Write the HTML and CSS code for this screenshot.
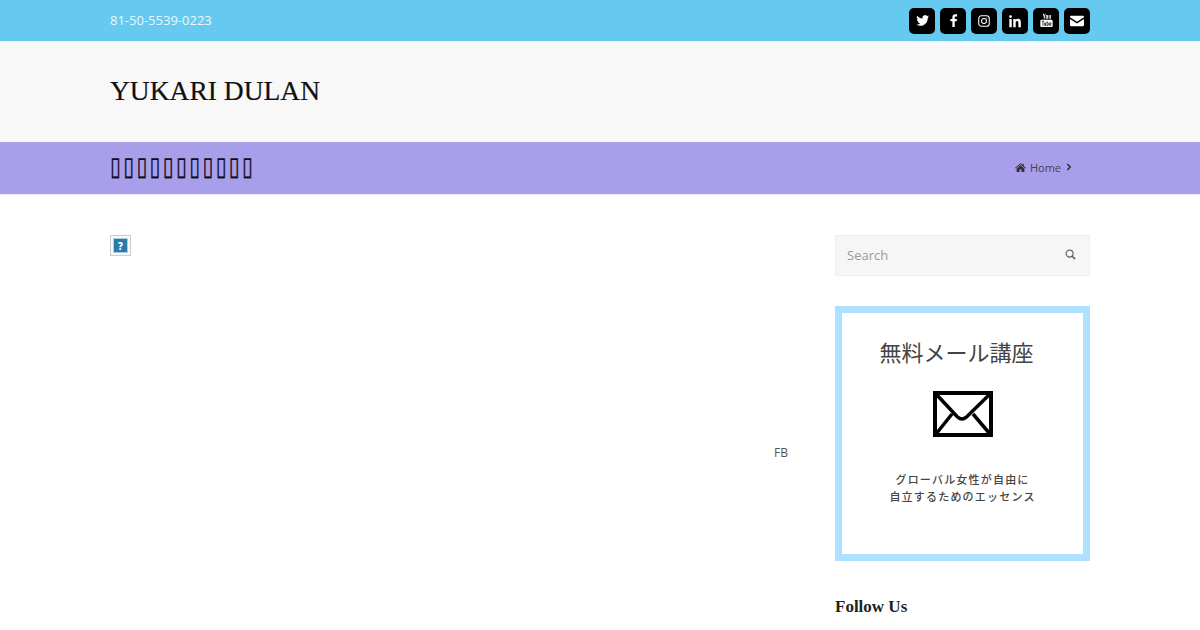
FILE: index.html
```html
<!DOCTYPE html>
<html lang="en">
<head>
<meta charset="utf-8">
<title>Yukari Dulan</title>
<link rel="stylesheet" href="styles.css">
</head>
<body>
<div class="topbar">
  <div class="wrap topbar-in">
    <span class="phone">81-50-5539-0223</span>
    <div class="social">
      <a class="soc"><svg viewBox="0 0 16 16" width="15" height="15"><path fill="#fff" d="M15 3.600c-.5.2-1 .4-1.600.4.600-.3 1-.9 1.200-1.500-.5.3-1.100.6-1.800.7a2.800 2.800 0 0 0-4.800 2.600C5.700 5.700 3.700 4.600 2.300 2.900c-.8 1.300-.4 2.900.9 3.800-.5 0-.9-.1-1.300-.4 0 1.400 1 2.600 2.300 2.800-.4.100-.8.100-1.300 0 .4 1.100 1.400 1.900 2.600 2-1.200 1-2.800 1.400-4.200 1.200 1.300.8 2.700 1.300 4.300 1.300 5.200 0 8.200-4.400 8-8.400.6-.4 1-.9 1.400-1.600z"/></svg></a>
      <a class="soc"><svg viewBox="0 0 16 16" width="15" height="15"><path fill="#fff" d="M9.300 15V8.700h2.100l.3-2.400H9.300V4.800c0-.7.200-1.200 1.200-1.200h1.300V1.400C11.500 1.400 10.800 1.300 10 1.300c-1.900 0-3.200 1.100-3.200 3.200v1.800H4.700v2.400h2.100V15z"/></svg></a>
      <a class="soc"><svg viewBox="0 0 16 16" width="14" height="14" fill="none" stroke="#fff" stroke-width="1.200"><rect x="2" y="2" width="12" height="12" rx="3"/><circle cx="8" cy="8" r="2.800"/><circle cx="11.400" cy="4.600" r=".6" fill="#fff" stroke="none"/></svg></a>
      <a class="soc"><svg viewBox="0 0 16 16" width="14" height="14"><path fill="#fff" d="M1.500 5.700h2.800V15H1.500zM2.900 1.300a1.600 1.600 0 1 1 0 3.200 1.600 1.600 0 0 1 0-3.200zM6 5.700h2.700v1.300c.5-.9 1.500-1.500 2.800-1.500 2.700 0 3.200 1.800 3.200 4.200V15h-2.800v-4.700c0-1.100-.1-2.400-1.500-2.400-1.500 0-1.600 1.100-1.600 2.300V15H6z"/></svg></a>
      <a class="soc"><svg viewBox="0 0 16 16" width="15" height="15"><path fill="#fff" d="M4 .8h.9l.7 2 .6-2h1L6.100 4v2.100h-1V4zM8.400 2c.8 0 1.200.5 1.200 1.100v1.900c0 .7-.5 1.100-1.200 1.100s-1.200-.4-1.200-1.100V3.100C7.200 2.500 7.700 2 8.400 2zm0 .8c-.2 0-.3.100-.3.300v2c0 .2.100.3.300.3s.3-.1.300-.3v-2c0-.2-.1-.3-.3-.3zM10.300 2.100h.9v3c0 .2.300.2.500-.1V2.100h.9v3.900h-.9v-.4c-.6.700-1.400.6-1.400-.2zM2.800 7.300h10.400c.8 0 1.400.6 1.400 1.400v4.900c0 .8-.6 1.400-1.400 1.400H2.800c-.8 0-1.400-.6-1.400-1.400V8.700c0-.8.600-1.400 1.400-1.400z"/><path stroke="#000" stroke-width=".7" fill="none" d="M3 8.800h2.400M4.200 8.800v5M6 10.200v2.900c0 .4.500.4 1-.1M7 10.200v3.500M8.500 8.700v5M8.500 10.600c.9-.6 1.400-.3 1.400.3v2c0 .7-.7.800-1.400.2M12.900 12.600c0 1.300-1.800 1.300-1.800 0v-1.500c0-1.200 1.800-1.200 1.800 0v.8h-1.800"/></svg></a>
      <a class="soc"><svg viewBox="0 0 16 16" width="16" height="16"><path fill="#fff" d="M1 3.900c0-.7.500-1.100 1.100-1.100h11.800c.6 0 1.100.4 1.100 1.100v.4L8 8.800 1 4.300zM1 5.900l7 4.500 7-4.500v6.200c0 .6-.5 1.100-1.100 1.100H2.100c-.6 0-1.100-.5-1.100-1.100z"/></svg></a>
    </div>
  </div>
</div>
<header class="masthead">
  <div class="wrap"><h1 class="logo">YUKARI DULAN</h1></div>
</header>
<div class="titlebar">
  <div class="wrap titlebar-in">
    <h2 class="page-title">▯▯▯▯▯▯▯▯▯▯▯</h2>
    <div class="crumbs">
      <svg class="home-ic" viewBox="0 0 12 10" width="11" height="9"><path fill="#333" d="M6 .3 0 5.300l.6.700L6 1.600 11.400 6l.6-.7L9.700 3.400V.8H8.300v1.400zM1.700 6v4h3.200V7.200h2.200V10h3.200V6L6 2.500z"/></svg>
      <span>Home</span>
      <svg class="chev" viewBox="0 0 6 8" width="6" height="8"><path fill="none" stroke="#222" stroke-width="1.300" d="M1.300 1l3 3-3 3"/></svg>
    </div>
  </div>
</div>
<div class="wrap content">
  <main class="main">
    <span class="broken"><svg viewBox="0 0 15 15" width="15" height="15"><rect x=".5" y=".5" width="14" height="14" fill="#2b78ad" stroke="#a9cfe6"/><text x="7.500" y="11.500" class="q">?</text></svg></span>
    <p class="fb">FB</p>
  </main>
  <aside class="side">
    <div class="search"><span>Search</span>
      <svg viewBox="0 0 12 12" width="11" height="11"><circle cx="5" cy="5" r="3.800" fill="none" stroke="#666" stroke-width="1.300"/><path d="M7.800 7.800 11 11" stroke="#666" stroke-width="1.700"/></svg>
    </div>
    <div class="banner">
      <div class="banner-title">無料メール講座</div>
      <svg class="env" viewBox="0 0 60 46" width="60" height="46"><rect x="2" y="2" width="56" height="42" fill="#fff" stroke="#000" stroke-width="4"/><path d="M3 3 24.500 26Q29 30 33.500 26L57 3M3 43 19 23M57 43 40 23" fill="none" stroke="#000" stroke-width="3.500"/></svg>
      <div class="banner-sub">グローバル女性が自由に<br>自立するためのエッセンス</div>
    </div>
    <h3 class="follow">Follow Us</h3>
  </aside>
</div>
</body>
</html>
```
FILE: styles.css
```css
* { box-sizing: border-box; }
html, body { margin: 0; padding: 0; }
body { height: 630px; overflow: hidden; background: #fff; font-family: "Open Sans", sans-serif; color: #555; }
.wrap { width: 980px; margin: 0 auto; }
.topbar { height: 41px; background: #65c9f0; }
.topbar-in { display: flex; justify-content: space-between; align-items: center; height: 41px; }
.phone { color: #e9f7fc; font-size: 13px; position: relative; top: -1px; }
.social { display: flex; gap: 5px; }
.soc { width: 26px; height: 26px; background: #000; border-radius: 5px; display: flex; align-items: center; justify-content: center; }
.masthead { height: 101px; background: #f8f8f8; border-top: 1px solid #eee; }
.logo { margin: 0; padding-top: 34px; font: 400 27.500px/30px "Liberation Serif", serif; color: #111; -webkit-text-stroke: .2px #111; }
.titlebar { height: 53px; background: #a99eea; border-bottom: 1px solid #ece9f8; }
.titlebar-in { display: flex; justify-content: space-between; align-items: center; height: 52px; }
.page-title { margin: 0 0 5px; font: 400 26px/30px "DejaVu Sans", sans-serif; color: #0c0c20; letter-spacing: 3.300px; transform: scaleX(.75); transform-origin: left center; -webkit-text-stroke: .3px #0c0c20; }
.crumbs { display: flex; align-items: center; gap: 4px; font-size: 11px; color: #444; padding: 0 18px 2px 0; }
.chev { margin-left: 1px; }
.content { display: flex; justify-content: space-between; padding-top: 41px; margin-top: -1px; }
.main { width: 678px; position: relative; }
.broken { display: inline-flex; width: 21px; height: 21px; align-items: center; justify-content: center; border: 1px solid #ccc; background: #f9f9f9; }
.q { font: 700 10px "DejaVu Sans", sans-serif; fill: #fff; text-anchor: middle; }
.fb { margin: 185px 0 0; text-align: right; font-size: 12px; line-height: 20px; color: #555; }
.side { width: 255px; }
.search { height: 41px; background: #f6f6f6; border: 1px solid #eee; display: flex; align-items: center; justify-content: space-between; padding: 0 13px 2px 11px; font-size: 13px; color: #999; }
.banner { margin-top: 30px; height: 255px; border: 7px solid #aee0ff; background: #fff; display: flex; flex-direction: column; align-items: center; font-family: "Noto Sans CJK JP", sans-serif; color: #444; }
.banner-title { margin-top: 20px; font-size: 22px; line-height: 36px; position: relative; left: -6px; }
.env { margin-top: 22px; }
.banner-sub { margin-top: 34px; text-align: center; font-size: 11px; line-height: 17px; letter-spacing: 1.200px; font-weight: 500; }
.follow { margin: 35px 0 0; font: 700 17px/22px "Liberation Serif", serif; color: #222; }
```
